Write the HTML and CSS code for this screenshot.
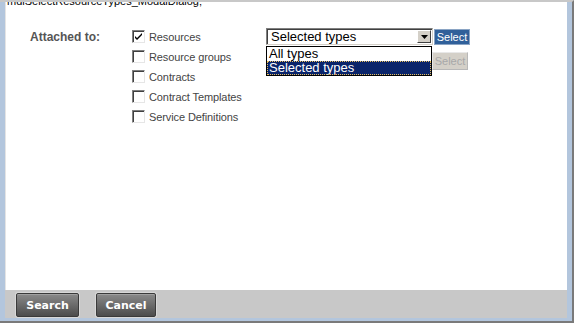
FILE: index.html
```html
<!DOCTYPE html>
<html lang="en">
<head>
    <meta charset="UTF-8">
    <title>Select Resource Types</title>
    <link rel="stylesheet" href="styles.css">
</head>
<body>
    <div class="window">
        <div class="frame">
            <div class="content">
                <div class="script-line">mdlSelectResourceTypes_ModalDialog;</div>

                <div class="form">
                    <div class="form-label">Attached to:</div>

                    <div class="rows">
                        <div class="row">
                            <label class="check"><span class="box checked"><svg width="9" height="9" viewBox="0 0 9 9"><path d="M1 4 L3 6 L8 1 L8 3 L3 8 L1 6 Z" fill="#000"/></svg></span>Resources</label>
                            <div class="picker">
                                <div class="select">
                                    <span class="select-text">Selected types</span>
                                    <span class="select-arrow"><svg width="7" height="4" viewBox="0 0 7 4"><path d="M0 0 H7 L3.5 4 Z" fill="#000"/></svg></span>
                                </div>
                                <button class="btn-select">Select</button>
                                <ul class="dropdown">
                                    <li>All types</li>
                                    <li class="active">Selected types</li>
                                </ul>
                            </div>
                        </div>
                        <div class="row">
                            <label class="check"><span class="box"></span>Resource groups</label>
                            <div class="picker">
                                <div class="select-spacer"></div>
                                <button class="btn-select disabled" disabled>Select</button>
                            </div>
                        </div>
                        <div class="row">
                            <label class="check"><span class="box"></span>Contracts</label>
                        </div>
                        <div class="row">
                            <label class="check"><span class="box"></span>Contract Templates</label>
                        </div>
                        <div class="row">
                            <label class="check"><span class="box"></span>Service Definitions</label>
                        </div>
                    </div>
                </div>
            </div>

            <div class="footer">
                <button class="btn-dark">Search</button>
                <button class="btn-dark">Cancel</button>
            </div>
        </div>
    </div>
</body>
</html>
```

FILE: styles.css
```css
body {
    margin: 0;
    font-family: "Liberation Sans", Arial, sans-serif;
    font-size: 11px;
    background: #fff;
}
.window {
    width: 574px;
    height: 323px;
    box-sizing: border-box;
    border-top: 2px solid #c8c8c8;
    border-right: 2px solid #7a7a7a;
    border-bottom: 2px solid #7a7a7a;
    display: flex;
}
.frame {
    flex: 1;
    display: flex;
    flex-direction: column;
    border-left: 5px solid #b3c6dd;
    border-right: 5px solid #b3c6dd;
    border-bottom: 3px solid #b3c6dd;
}
.content {
    flex: 1;
    background: #fff;
    overflow: hidden;
    border-left: 1px solid #e4e4e4;
}
.script-line {
    margin-top: -7px;
    padding-left: 1px;
    font-size: 11px;
    line-height: 13px;
    color: #000;
}
.form {
    display: flex;
    padding: 20px 0 0 24px;
}
.form-label {
    width: 102px;
    font-weight: bold;
    font-size: 12px;
    color: #555;
    line-height: 18px;
}
.rows {
    display: flex;
    flex-direction: column;
}
.row {
    display: flex;
    height: 20px;
}
.check {
    width: 134px;
    display: flex;
    align-items: center;
    height: 17px;
    color: #444;
    font-size: 11px;
    letter-spacing: -0.1px;
}
.box {
    width: 11px;
    height: 11px;
    margin-right: 4px;
    background: #fff;
    border-top: 1px solid #808080;
    border-left: 1px solid #808080;
    border-right: 1px solid #e6e6e6;
    border-bottom: 1px solid #e6e6e6;
    box-shadow: inset 1px 1px 0 #404040;
    display: flex;
    align-items: center;
    justify-content: center;
}
.picker {
    position: relative;
    display: flex;
    align-items: flex-start;
}
.select {
    width: 162px;
    height: 15px;
    display: flex;
    justify-content: space-between;
    align-items: center;
    background: #fff;
    border-top: 1px solid #808080;
    border-left: 1px solid #808080;
    border-right: 1px solid #d4d0c8;
    border-bottom: 1px solid #d4d0c8;
    box-shadow: inset 1px 1px 0 #404040;
    padding: 0 1px 0 2px;
}
.select-text {
    font-size: 13px;
    color: #000;
    padding-left: 2px;
}
.select-arrow {
    width: 14px;
    height: 13px;
    box-sizing: border-box;
    background: #d4d0c8;
    border: 1px solid;
    border-color: #fff #404040 #404040 #fff;
    display: flex;
    align-items: center;
    justify-content: center;
}
.select-spacer {
    width: 166px;
}
.btn-select {
    margin: 1px 0 0 1px;
    height: 16px;
    width: 36px;
    padding: 0;
    font-family: "Liberation Sans", Arial, sans-serif;
    font-size: 11px;
    color: #fff;
    background: #30609a;
    border: 1px solid #8aa4c4;
}
.btn-select.disabled {
    margin: 4px 0 0 0;
    height: 18px;
    color: #a8a8a8;
    background: #d4d0c8;
    border-color: #e8e8e8 #b8b8b8 #b8b8b8 #e8e8e8;
}
.dropdown {
    position: absolute;
    top: 18px;
    left: 0;
    width: 164px;
    margin: 0;
    padding: 0;
    list-style: none;
    background: #fff;
    border: 1px solid #000;
    font-size: 13px;
    z-index: 2;
}
.dropdown li {
    height: 14px;
    line-height: 14px;
    padding-left: 2px;
    color: #000;
}
.dropdown li.active {
    background: #0a246a;
    color: #fff;
    outline: 1px dotted #e8c060;
    outline-offset: -1px;
}
.footer {
    height: 28px;
    background: #c8c8c8;
    display: flex;
    align-items: center;
    gap: 17px;
    padding-left: 11px;
    padding-top: 2px;
    box-sizing: border-box;
}
.btn-dark {
    height: 24px;
    padding: 0;
    font-family: "DejaVu Sans", Verdana, sans-serif;
    font-weight: bold;
    font-size: 11px;
    color: #fff;
    background: linear-gradient(#8a8a8a, #4c4c4c);
    border: 1px solid #3a3a3a;
    box-shadow: 0 0 0 1px #d8d8d8, inset 0 1px 0 #a0a0a0;
    border-radius: 2px;
}
.btn-dark:first-child {
    width: 63px;
}
.btn-dark:last-child {
    width: 60px;
}
```
